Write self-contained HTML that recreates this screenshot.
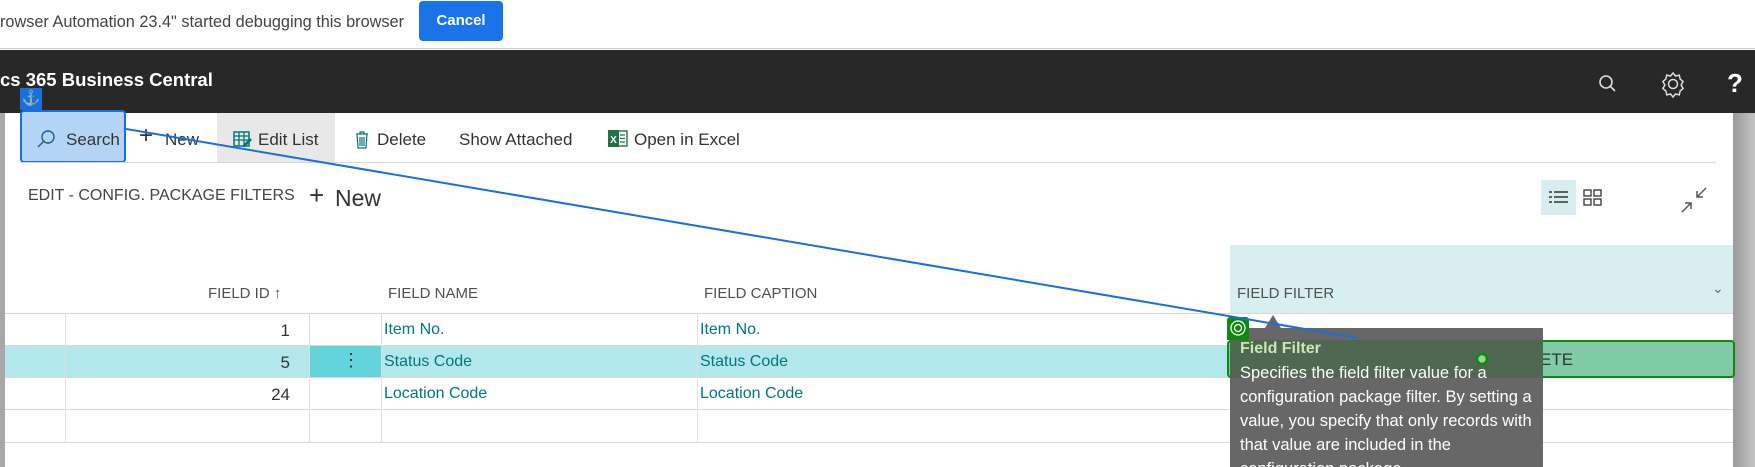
<!DOCTYPE html>
<html><head><meta charset="utf-8"><style>
*{margin:0;padding:0;box-sizing:border-box}
body{width:1755px;height:467px;overflow:hidden;background:#fff;font-family:"Liberation Sans",sans-serif;position:relative;color:#333}
.a{position:absolute;white-space:nowrap}
.hd{font-size:15px;color:#505050;letter-spacing:0}
.cell{font-size:16px;color:#00777a}
.tb{font-size:17px;color:#333}
.line{position:absolute;height:1px;background:#d8d8d8}
.vl{position:absolute;width:1px;background:#e0e0e0}
</style></head><body>
<div class="a" style="left:0;top:13px;font-size:16.3px;color:#444">rowser Automation 23.4" started debugging this browser</div>
<div class="a" style="left:419px;top:1px;width:84px;height:40px;background:#1a73e8;border-radius:4px;color:#fff;font-size:15px;font-weight:bold;text-align:center;line-height:40px">Cancel</div>
<div class="line" style="left:0;top:48px;width:1755px;background:#ccc"></div>
<div class="a" style="left:0;top:50px;width:1755px;height:63px;background:#282828"></div>
<div class="a" style="left:0;top:69px;font-size:18.5px;font-weight:bold;color:#fff">cs 365 Business Central</div>
<svg class="a" style="left:1596px;top:72px" width="24" height="24" viewBox="0 0 24 24"><circle cx="10" cy="10" r="6" fill="none" stroke="#ddd" stroke-width="1.6"/><line x1="14.5" y1="14.5" x2="19" y2="19" stroke="#ddd" stroke-width="1.6"/></svg>
<svg class="a" style="left:1659px;top:70px" width="28" height="28" viewBox="0 0 28 28"><path d="M14 3l2.5 3 3.8-.8.8 3.8 3 2.5-2 3.5 2 3.5-3 2.5-.8 3.8-3.8-.8L14 27l-2.5-3-3.8.8-.8-3.8-3-2.5 2-3.5-2-3.5 3-2.5.8-3.8 3.8.8z" fill="none" stroke="#ddd" stroke-width="1.5"/><circle cx="14" cy="14" r="4.5" fill="none" stroke="#ddd" stroke-width="1.5"/></svg>
<div class="a" style="left:1727px;top:68px;font-size:26px;font-weight:bold;color:#fff">?</div>
<div class="a" style="left:1733px;top:113px;width:22px;height:354px;background:linear-gradient(90deg,#9a9a9a,#c4c4c4)"></div>
<div class="a" style="left:0;top:113px;width:5px;height:354px;background:#a8a8a8"></div>
<div class="a" style="left:217px;top:113px;width:118px;height:49px;background:#e8e8e8"></div>
<div class="a" style="left:20px;top:110px;width:106px;height:53px;background:#b3d4f5;border:2px solid #1a6fd8;border-radius:4px"></div>
<div class="a" style="left:20px;top:88px;width:22px;height:22px;background:#1a6fd8;color:#fff;font-size:15px;text-align:center;line-height:22px">⚓</div>
<svg class="a" style="left:36px;top:129px" width="20" height="20" viewBox="0 0 20 20"><circle cx="12" cy="8" r="6" fill="none" stroke="#1f5f86" stroke-width="1.4"/><line x1="8" y1="12" x2="2" y2="18" stroke="#1f5f86" stroke-width="1.4"/></svg>
<div class="a tb" style="left:66px;top:130px">Search</div>
<div class="a" style="left:139px;top:124px;font-size:24px;color:#333;font-weight:300;line-height:24px">+</div>
<div class="a tb" style="left:165px;top:130px">New</div>
<svg class="a" style="left:233px;top:130px" width="19" height="18" viewBox="0 0 19 18"><rect x="1" y="2" width="15" height="14" fill="none" stroke="#00777a" stroke-width="1.5"/><path d="M1 6h15M1 10h15M6 2v14M11 2v14" stroke="#00777a" stroke-width="1.3"/><path d="M10 15l7-7 2 2-7 7h-2z" fill="#00777a"/></svg>
<div class="a tb" style="left:258px;top:130px">Edit List</div>
<svg class="a" style="left:354px;top:130px" width="16" height="19" viewBox="0 0 16 19"><path d="M2 4h12M6 4V2h4v2M3 4l1 14h8l1-14M6 7v9M8 7v9M10 7v9" fill="none" stroke="#00777a" stroke-width="1.2"/></svg>
<div class="a tb" style="left:377px;top:130px">Delete</div>
<div class="a tb" style="left:459px;top:130px">Show Attached</div>
<svg class="a" style="left:608px;top:129px" width="20" height="19" viewBox="0 0 20 19"><rect x="9" y="2" width="10" height="15" fill="none" stroke="#217346" stroke-width="1.4"/><path d="M12 6h5M12 9.5h5M12 13h5" stroke="#217346" stroke-width="1.3"/><rect x="0" y="1" width="11" height="17" fill="#217346"/><text x="5.5" y="14" font-size="10" font-weight="bold" fill="#fff" text-anchor="middle" font-family="Liberation Sans">X</text></svg>
<div class="a tb" style="left:634px;top:130px">Open in Excel</div>
<div class="line" style="left:20px;top:162px;width:1696px"></div>
<div class="a" style="left:28px;top:187px;font-size:16px;color:#444">EDIT - CONFIG. PACKAGE FILTERS</div>
<div class="a" style="left:309px;top:182px;font-size:26px;color:#333;line-height:26px;font-weight:300">+</div>
<div class="a" style="left:335px;top:185px;font-size:23px;color:#333">New</div>
<div class="a" style="left:1541px;top:180px;width:35px;height:35px;background:#d6eef0"></div>
<svg class="a" style="left:1548px;top:189px" width="22" height="18" viewBox="0 0 22 18"><path d="M1 3h3M1 8h3M1 13h3M6 3h14M6 8h14M6 13h14" stroke="#333" stroke-width="1.4"/></svg>
<svg class="a" style="left:1583px;top:189px" width="20" height="18" viewBox="0 0 20 18"><rect x="1" y="1" width="7" height="6" fill="none" stroke="#333" stroke-width="1.3"/><rect x="11" y="1" width="7" height="6" fill="none" stroke="#333" stroke-width="1.3"/><rect x="1" y="10" width="7" height="6" fill="none" stroke="#333" stroke-width="1.3"/><rect x="11" y="10" width="7" height="6" fill="none" stroke="#333" stroke-width="1.3"/></svg>
<svg class="a" style="left:1680px;top:186px" width="28" height="28" viewBox="0 0 28 28"><path d="M26 2l-9 9M17 5v6h6M2 26l9-9M11 23v-6H5" fill="none" stroke="#555" stroke-width="1.5"/></svg>
<div class="a" style="left:1230px;top:245px;width:503px;height:68px;background:#d8eff1"></div>
<div class="a" style="left:5px;top:345px;width:1225px;height:32px;background:#b2e8eb"></div>
<div class="a" style="left:309px;top:345px;width:72px;height:32px;background:#63d4dc"></div>
<div class="a" style="left:342px;top:347px;font-size:18px;color:#333;line-height:26px">⋮</div>
<div class="a hd" style="left:208px;top:285px">FIELD ID ↑</div>
<div class="a hd" style="left:388px;top:285px">FIELD NAME</div>
<div class="a hd" style="left:704px;top:285px">FIELD CAPTION</div>
<div class="a hd" style="left:1237px;top:285px">FIELD FILTER</div>
<div class="a" style="left:1712px;top:280px;font-size:14px;color:#666">⌄</div>
<div class="line" style="left:5px;top:313px;width:1728px"></div>
<div class="line" style="left:5px;top:345px;width:1728px"></div>
<div class="line" style="left:5px;top:377px;width:1728px"></div>
<div class="line" style="left:5px;top:409px;width:1728px"></div>
<div class="line" style="left:5px;top:442px;width:1728px"></div>
<div class="vl" style="left:65px;top:313px;height:129px"></div>
<div class="vl" style="left:309px;top:313px;height:129px"></div>
<div class="vl" style="left:381px;top:313px;height:129px"></div>
<div class="vl" style="left:697px;top:313px;height:129px"></div>
<div class="a" style="left:260px;top:321px;font-size:17px;color:#333;width:30px;text-align:right">1</div>
<div class="a" style="left:260px;top:353px;font-size:17px;color:#333;width:30px;text-align:right">5</div>
<div class="a" style="left:260px;top:385px;font-size:17px;color:#333;width:30px;text-align:right">24</div>
<div class="a cell" style="left:384px;top:321px">Item No.</div>
<div class="a cell" style="left:384px;top:353px">Status Code</div>
<div class="a cell" style="left:384px;top:385px">Location Code</div>
<div class="a cell" style="left:700px;top:321px">Item No.</div>
<div class="a cell" style="left:700px;top:353px">Status Code</div>
<div class="a cell" style="left:700px;top:385px">Location Code</div>
<div class="a" style="left:1227px;top:340px;width:508px;height:38px;background:#7fcba5;border:2px solid #0e8a0e;border-radius:4px"></div>
<div class="a" style="left:1540px;top:350px;font-size:17px;color:#333">ETE</div>
<div class="a" style="left:1265px;top:315px;width:0;height:0;border-left:8px solid transparent;border-right:8px solid transparent;border-bottom:13px solid #666"></div>
<div class="a" style="left:1230px;top:328px;width:313px;height:139px;background:rgba(95,95,95,0.95)"></div>
<div class="a" style="left:1230px;top:341px;width:313px;height:35px;background:rgba(60,110,60,0.45)"></div>
<div class="a" style="left:1240px;top:340px;font-size:16px;font-weight:bold;color:#c6e8b4">Field Filter</div>
<div class="a" style="left:1240px;top:361px;font-size:16.5px;line-height:24px;color:#fff;white-space:normal;width:298px;height:106px;overflow:hidden">Specifies the field filter value for a configuration package filter. By setting a value, you specify that only records with that value are included in the configuration package.</div>
<div class="a" style="left:1227px;top:317px;width:22px;height:23px;background:#0e8a0e;border-radius:3px 3px 0 0"></div>
<svg class="a" style="left:1229px;top:319px" width="18" height="18" viewBox="0 0 18 18"><circle cx="9" cy="9" r="7" fill="none" stroke="#fff" stroke-width="1.3"/><circle cx="9" cy="9" r="3.5" fill="none" stroke="#fff" stroke-width="1.3"/></svg>
<svg class="a" style="left:0;top:0" width="1755" height="467"><line x1="126" y1="129" x2="1358" y2="338" stroke="#1a6fd8" stroke-width="2"/><circle cx="1482" cy="359" r="5" fill="#9ad09a" stroke="#0e8a0e" stroke-width="2.5"/></svg>
</body></html>
